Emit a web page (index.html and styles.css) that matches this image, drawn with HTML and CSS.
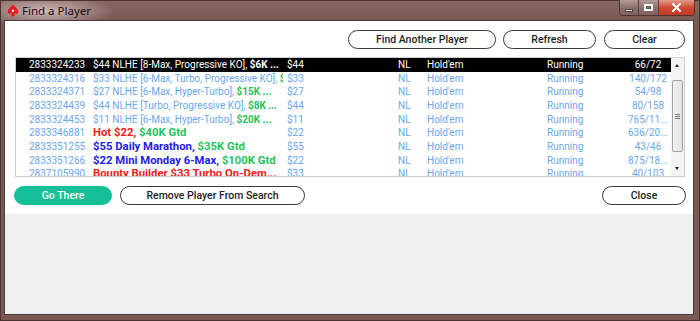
FILE: index.html
```html
<!DOCTYPE html>
<html>
<head>
<meta charset="utf-8">
<title>Find a Player</title>
<link rel="stylesheet" href="styles.css">
</head>
<body>
<div class="window">
  <div class="titlebar">
    <svg class="app-icon" width="12" height="13" viewBox="0 0 16 17">
      <path d="M8 0.5 C5.5 4 1 6.5 1 10 C1 12.8 4.2 13.8 6.6 11.8 L5.4 16 H10.6 L9.4 11.8 C11.8 13.8 15 12.8 15 10 C15 6.5 10.5 4 8 0.5Z" fill="#e8141c"/>
      <path d="M8 6.2 L8.7 8.1 L10.6 8.1 L9.1 9.2 L9.7 11 L8 9.9 L6.3 11 L6.9 9.2 L5.4 8.1 L7.3 8.1Z" fill="#ffffff"/>
    </svg>
    <span class="title">Find a Player</span>
    <div class="controls">
      <div class="ctl ctl-min"><span class="min-bar"></span></div>
      <div class="ctl ctl-max"><span class="max-box"></span></div>
      <div class="ctl ctl-close">
        <svg width="11" height="9" viewBox="0 0 11 9"><path d="M2 1 L9 8 M9 1 L2 8" stroke="#ffffff" stroke-width="2" stroke-linecap="square"/></svg>
      </div>
    </div>
  </div>
  <div class="client">
    <div class="panel">
      <div class="toolbar">
        <button class="btn btn-find">Find Another Player</button>
        <button class="btn btn-refresh">Refresh</button>
        <button class="btn btn-clear">Clear</button>
      </div>
      <div class="list">
        <div class="rows">
          <div class="row selected">
            <span class="c-id">2833324233</span>
            <span class="c-name">$44 NLHE [8-Max, Progressive KO], <b>$6K ...</b></span>
            <span class="c-buy">$44</span>
            <span class="c-lim">NL</span>
            <span class="c-game">Hold'em</span>
            <span class="c-stat">Running</span>
            <span class="c-ent">66/72</span>
          </div>
          <div class="row">
            <span class="c-id">2833324316</span>
            <span class="c-name">$33 NLHE [6-Max, Turbo, Progressive KO], <b class="g">$10K Gtd</b></span>
            <span class="c-buy">$33</span>
            <span class="c-lim">NL</span>
            <span class="c-game">Hold'em</span>
            <span class="c-stat">Running</span>
            <span class="c-ent">140/172</span>
          </div>
          <div class="row">
            <span class="c-id">2833324371</span>
            <span class="c-name">$27 NLHE [6-Max, Hyper-Turbo], <b class="g">$15K ...</b></span>
            <span class="c-buy">$27</span>
            <span class="c-lim">NL</span>
            <span class="c-game">Hold'em</span>
            <span class="c-stat">Running</span>
            <span class="c-ent">54/98</span>
          </div>
          <div class="row">
            <span class="c-id">2833324439</span>
            <span class="c-name">$44 NLHE [Turbo, Progressive KO], <b class="g">$8K ...</b></span>
            <span class="c-buy">$44</span>
            <span class="c-lim">NL</span>
            <span class="c-game">Hold'em</span>
            <span class="c-stat">Running</span>
            <span class="c-ent">80/158</span>
          </div>
          <div class="row">
            <span class="c-id">2833324453</span>
            <span class="c-name">$11 NLHE [6-Max, Hyper-Turbo], <b class="g">$20K ...</b></span>
            <span class="c-buy">$11</span>
            <span class="c-lim">NL</span>
            <span class="c-game">Hold'em</span>
            <span class="c-stat">Running</span>
            <span class="c-ent">765/11...</span>
          </div>
          <div class="row">
            <span class="c-id">2833346881</span>
            <span class="c-name big"><b class="r">Hot $22, </b><b class="g">$40K Gtd</b></span>
            <span class="c-buy">$22</span>
            <span class="c-lim">NL</span>
            <span class="c-game">Hold'em</span>
            <span class="c-stat">Running</span>
            <span class="c-ent">636/20...</span>
          </div>
          <div class="row">
            <span class="c-id">2833351255</span>
            <span class="c-name big"><b class="b">$55 Daily Marathon, </b><b class="g">$35K Gtd</b></span>
            <span class="c-buy">$55</span>
            <span class="c-lim">NL</span>
            <span class="c-game">Hold'em</span>
            <span class="c-stat">Running</span>
            <span class="c-ent">43/46</span>
          </div>
          <div class="row">
            <span class="c-id">2833351266</span>
            <span class="c-name big"><b class="b">$22 Mini Monday 6-Max, </b><b class="g">$100K Gtd</b></span>
            <span class="c-buy">$22</span>
            <span class="c-lim">NL</span>
            <span class="c-game">Hold'em</span>
            <span class="c-stat">Running</span>
            <span class="c-ent">875/18...</span>
          </div>
          <div class="row">
            <span class="c-id">2837105990</span>
            <span class="c-name big"><b class="r">Bounty Builder $33 Turbo On-Dem...</b></span>
            <span class="c-buy">$33</span>
            <span class="c-lim">NL</span>
            <span class="c-game">Hold'em</span>
            <span class="c-stat">Running</span>
            <span class="c-ent">40/103</span>
          </div>
        </div>
        <div class="scrollbar">
          <div class="arrow arrow-up"></div>
          <div class="track">
            <div class="thumb"><span class="grip"></span></div>
          </div>
          <div class="arrow arrow-down"></div>
        </div>
      </div>
      <div class="actions">
        <button class="btn btn-go">Go There</button>
        <button class="btn btn-remove">Remove Player From Search</button>
        <span class="spacer"></span>
        <button class="btn btn-close">Close</button>
      </div>
    </div>
    <div class="empty"></div>
  </div>
</div>
</body>
</html>
```

FILE: styles.css
```css
* { box-sizing: border-box; }
html, body { margin: 0; padding: 0; }
body {
  width: 700px;
  height: 321px;
  overflow: hidden;
  background: #7a5955;
  font-family: Roboto, "Liberation Sans", Arial, sans-serif;
}
.window {
  width: 700px;
  height: 321px;
  display: flex;
  flex-direction: column;
  border: 1px solid #4a3432;
  background:
    radial-gradient(ellipse 70px 16px at 44px 10px, rgba(235, 215, 212, 0.75), rgba(235, 215, 212, 0) 100%),
    linear-gradient(#866662, #7a5955 20px, #7a5955);
}
.titlebar {
  height: 19px;
  display: flex;
  align-items: center;
  position: relative;
  padding-left: 6px;
}
.app-icon { flex: none; }
.title {
  margin-left: 3px;
  font-family: "Noto Sans", "Open Sans", sans-serif;
  font-size: 11.5px;
  color: #141010;
}
.controls {
  position: absolute;
  right: 4px;
  top: -1px;
  display: flex;
  height: 16px;
  border: 1px solid #4d3532;
  border-top: none;
  border-radius: 0 0 4px 4px;
  overflow: hidden;
}
.ctl {
  display: flex;
  align-items: center;
  justify-content: center;
  height: 100%;
}
.ctl-min, .ctl-max {
  width: 19px;
  background: linear-gradient(#b09a97, #8d716d 50%, #7f625e);
  border-right: 1px solid #5b423f;
}
.ctl-max { width: 20px; }
.ctl-close {
  width: 35px;
  background: linear-gradient(#e39a87, #cf4b35 50%, #c43a25);
}
.min-bar {
  width: 8px;
  height: 3px;
  background: #fff;
  border: 1px solid #444;
  margin-top: 5px;
}
.max-box {
  width: 9px;
  height: 7px;
  border: 2px solid #fff;
  outline: 1px solid #555;
  outline-offset: -3px;
}
.client {
  flex: 1;
  margin: 0 5px 5px 3px;
  border: 1px solid #4e3c3a;
  background: #f0f0f0;
  display: flex;
  flex-direction: column;
}
.panel {
  background: #ffffff;
  padding: 9px 8px 9px 10px;
  display: flex;
  flex-direction: column;
}
.toolbar {
  display: flex;
  justify-content: flex-end;
}
.btn {
  height: 19px;
  border: 1px solid #3a3a3a;
  border-radius: 10px;
  background: #ffffff;
  font-family: Roboto, "Liberation Sans", sans-serif;
  font-weight: 500;
  font-size: 10.5px;
  color: #1e1e1e;
  padding: 0;
  line-height: 17px;
  text-align: center;
}
.btn-find { width: 148px; }
.btn-refresh { width: 93px; margin-left: 7px; }
.btn-clear { width: 81px; margin-left: 8px; }
.list {
  margin-top: 8px;
  height: 120px;
  border: 1px solid #cfcfcf;
  display: flex;
  overflow: hidden;
}
.rows {
  flex: 1;
  overflow: hidden;
}
.row {
  height: 13.67px;
  display: grid;
  grid-template-columns: 77px 194px 111px 29px 120px 81px 40px;
  align-items: center;
  font-size: 10px;
  line-height: 13.67px;
  color: #6aa7ef;
  white-space: nowrap;
}
.row > span { overflow: hidden; }
.row.selected { background: #000000; color: #ffffff; }
.row.selected .c-name, .row.selected b { color: #ffffff; }
.c-id { padding-left: 13px; }
.c-name { margin-right: 4px; color: #6aa7ef; }
.c-name b { font-weight: 700; }
.c-name.big { font-size: 11.3px; }
.c-ent { text-align: center; }
.g { color: #1fc45c; }
.r { color: #f51a1a; }
.b { color: #2121ee; }
.scrollbar {
  width: 13px;
  flex: none;
  background: #f3f3f3;
  display: flex;
  flex-direction: column;
  align-items: center;
  padding: 1px 0;
}
.arrow {
  width: 11px;
  height: 15px;
  position: relative;
}
.arrow::after {
  content: "";
  position: absolute;
  left: 3px;
  border-left: 2.5px solid transparent;
  border-right: 2.5px solid transparent;
}
.arrow-up::after { top: 5px; border-bottom: 3px solid #222; }
.arrow-down::after { bottom: 5px; border-top: 3px solid #222; }
.track {
  flex: 1;
  width: 100%;
  padding: 6px 1px 0;
}
.thumb {
  height: 72px;
  border: 1px solid #a2a2a2;
  border-radius: 2px;
  background: linear-gradient(90deg, #f2f2f2, #e2e2e2);
  display: flex;
  align-items: center;
  justify-content: center;
}
.grip {
  width: 5px;
  height: 5px;
  border-top: 1px solid #777;
  border-bottom: 1px solid #777;
  position: relative;
}
.grip::after {
  content: "";
  position: absolute;
  left: 0;
  right: 0;
  top: 1px;
  border-top: 1px solid #777;
}
.actions {
  margin-top: 9px;
  margin-left: -1px;
  margin-right: -1px;
  display: flex;
  gap: 8px;
}
.spacer { flex: 1; }
.btn-go {
  width: 98px;
  background: #15bf98;
  border-color: #15bf98;
  color: #ffffff;
}
.btn-remove { width: 185px; }
.btn-close { width: 84px; }
.empty { flex: 1; background: #f0f0f0; }
```
